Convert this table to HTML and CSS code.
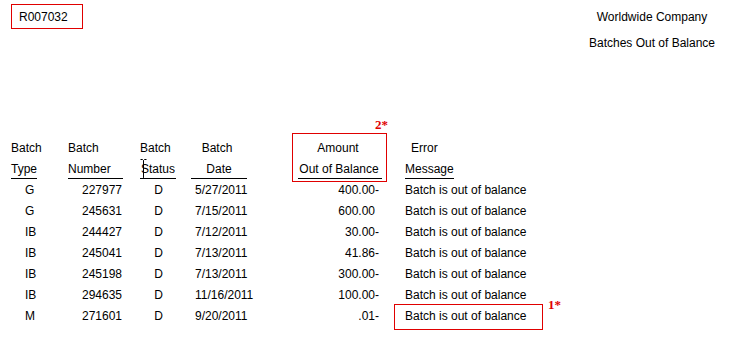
FILE: index.html
```html
<!DOCTYPE html>
<html>
<head>
<meta charset="utf-8">
<link rel="stylesheet" href="styles.css">
</head>
<body>
<div class="page">
  <header class="top">
    <div class="report-id">R007032</div>
    <div class="titles">
      <div class="title">Worldwide Company</div>
      <div class="title second">Batches Out of Balance</div>
    </div>
  </header>

  <div class="grid">
    <div class="c1">Batch</div>
    <div class="c2">Batch</div>
    <div class="c3">Batch</div>
    <div class="c4 hc">Batch</div>
    <div class="c5 hc">Amount</div>
    <div class="c6 err">Error</div>

    <div class="c1"><span class="ul">Type</span></div>
    <div class="c2"><span class="ul w55">Number</span></div>
    <div class="c3"><span class="ul w36 pl1">Status</span></div>
    <div class="c4"><span class="ul w56 center">Date</span></div>
    <div class="c5"><span class="ul w84 center">Out of Balance</span></div>
    <div class="c6"><span class="ul">Message</span></div>

    <div class="c1 type">G</div><div class="c2"><span class="num">227977</span></div><div class="c3"><span class="st">D</span></div><div class="c4 date">5/27/2011</div><div class="c5"><span class="amt">400.00-</span></div><div class="c6">Batch is out of balance</div>
    <div class="c1 type">G</div><div class="c2"><span class="num">245631</span></div><div class="c3"><span class="st">D</span></div><div class="c4 date">7/15/2011</div><div class="c5"><span class="amt pos">600.00</span></div><div class="c6">Batch is out of balance</div>
    <div class="c1 type">IB</div><div class="c2"><span class="num">244427</span></div><div class="c3"><span class="st">D</span></div><div class="c4 date">7/12/2011</div><div class="c5"><span class="amt">30.00-</span></div><div class="c6">Batch is out of balance</div>
    <div class="c1 type">IB</div><div class="c2"><span class="num">245041</span></div><div class="c3"><span class="st">D</span></div><div class="c4 date">7/13/2011</div><div class="c5"><span class="amt">41.86-</span></div><div class="c6">Batch is out of balance</div>
    <div class="c1 type">IB</div><div class="c2"><span class="num">245198</span></div><div class="c3"><span class="st">D</span></div><div class="c4 date">7/13/2011</div><div class="c5"><span class="amt">300.00-</span></div><div class="c6">Batch is out of balance</div>
    <div class="c1 type">IB</div><div class="c2"><span class="num">294635</span></div><div class="c3"><span class="st">D</span></div><div class="c4 date">11/16/2011</div><div class="c5"><span class="amt">100.00-</span></div><div class="c6">Batch is out of balance</div>
    <div class="c1 type">M</div><div class="c2"><span class="num">271601</span></div><div class="c3"><span class="st">D</span></div><div class="c4 date">9/20/2011</div><div class="c5"><span class="amt">.01-</span></div><div class="c6">Batch is out of balance</div>

    <div class="callout box-amount"></div>
    <div class="callout-label label-2">2*</div>
    <div class="callout box-error"></div>
    <div class="callout-label label-1">1*</div>
    <svg class="cursor" width="7" height="20" viewBox="0 0 7 20" aria-hidden="true">
      <path d="M0.5 0.5H2.5L3.5 1.5L4.5 0.5H6.5M3.5 1.5V18.5M0.5 19.5H2.5L3.5 18.5L4.5 19.5H6.5" fill="none" stroke="#000" stroke-width="1"/>
    </svg>
  </div>
</div>
</body>
</html>
```

FILE: styles.css
```css
html, body {
  margin: 0;
  padding: 0;
  background: #fff;
}

body {
  font-family: "Liberation Sans", Arial, sans-serif;
  font-size: 12px;
  line-height: 14px;
  color: #000;
}

.page {
  width: 735px;
  height: 339px;
  overflow: hidden;
}

.top {
  display: flex;
  justify-content: space-between;
  align-items: flex-start;
  padding: 4px 13px 0 11px;
}

.report-id {
  box-sizing: border-box;
  width: 72px;
  height: 25px;
  border: 1px solid #e00000;
  padding: 5px 0 0 7px;
}

.titles {
  width: 140px;
  margin-top: 6px;
  text-align: center;
}

.second {
  margin-top: 12px;
}

.grid {
  position: relative;
  margin-top: 87px;
  padding-left: 11px;
  display: grid;
  grid-template-columns: 57px 72px 51px 107px 107px 1fr;
  grid-auto-rows: 21px;
}

.grid > div {
  padding-top: 4px;
  white-space: nowrap;
}

.hc {
  text-align: left;
}

.c4.hc {
  box-sizing: border-box;
  width: 56px;
  text-align: center;
  padding-right: 4px;
}

.c5.hc {
  width: 84px;
  text-align: center;
  padding-right: 4px;
  box-sizing: border-box;
}

.err {
  padding-left: 6px;
}

.ul {
  display: inline-block;
  border-bottom: 1px solid #000;
  padding-bottom: 2px;
  box-sizing: content-box;
}

.w55 { width: 55px; }
.w36 { width: 35px; }
.w56 { width: 56px; }
.w84 { width: 84px; }
.pl1 { padding-left: 1px; }
.center { text-align: center; }

.c5 .ul.w84 {
  width: 82px;
  padding-right: 2px;
}

.type {
  padding-left: 14px;
}

.num {
  display: inline-block;
  width: 54px;
  text-align: right;
}

.st {
  display: inline-block;
  width: 37px;
  text-align: center;
}

.date {
  padding-left: 4px;
}

.amt {
  display: inline-block;
  width: 81px;
  text-align: right;
}

.amt.pos {
  box-sizing: border-box;
  padding-right: 4px;
}

.callout {
  position: absolute;
  box-sizing: border-box;
  border: 1px solid #e00000;
}

.box-amount {
  left: 292px;
  top: -4px;
  width: 95px;
  height: 49px;
}

.box-error {
  left: 394px;
  top: 167px;
  width: 149px;
  height: 26px;
}

.callout-label {
  position: absolute;
  font-family: "Liberation Serif", "Times New Roman", serif;
  font-weight: bold;
  font-size: 13px;
  line-height: 13px;
  color: #e00000;
}

.label-2 {
  left: 375px;
  top: -23px;
}

.label-1 {
  left: 548px;
  top: 157px;
}

.cursor {
  position: absolute;
  left: 140px;
  top: 22px;
}
```
